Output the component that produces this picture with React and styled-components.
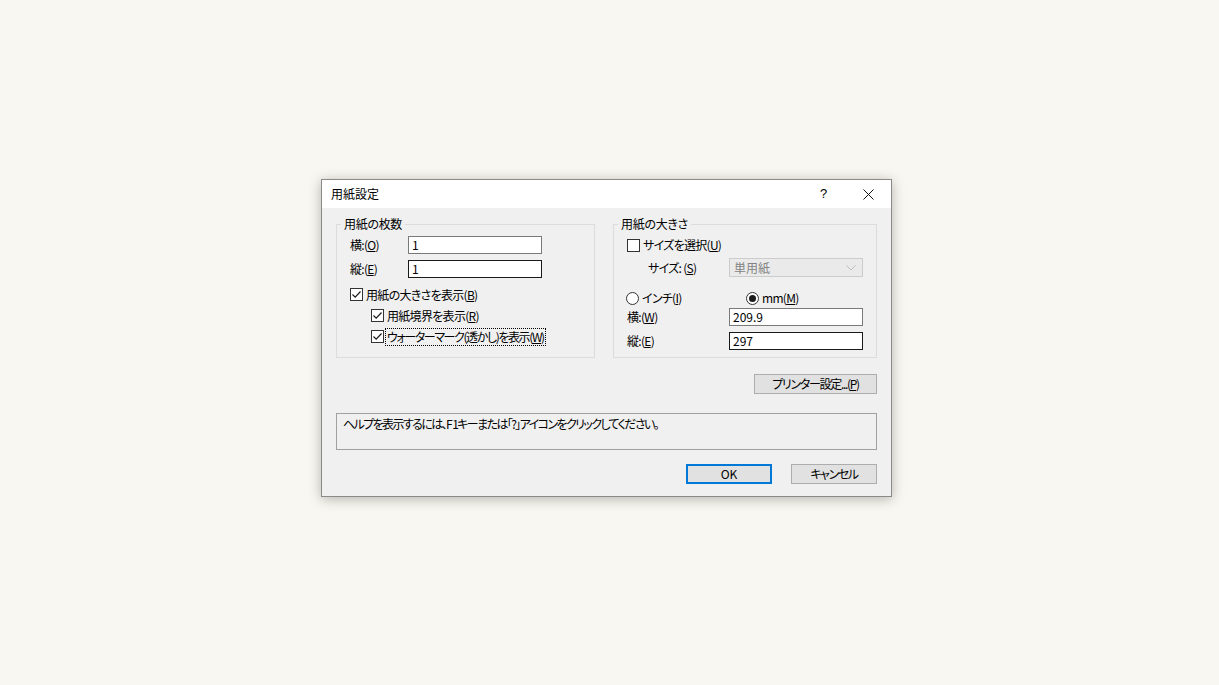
import styled, { createGlobalStyle } from "styled-components";

const GlobalStyle = createGlobalStyle`
	html, body {
		margin: 0;
		padding: 0;
		background: #f8f7f1;
	}
	body {
		font-family: "Noto Sans CJK JP", "Liberation Sans", sans-serif;
		font-size: 12px;
		line-height: 16px;
		color: #000000;
		font-feature-settings: "palt";
		letter-spacing: -0.7px;
	}
`;

function CheckBox({ checked }) {
	return (
		<Box>
			{checked && (
				<svg width="11" height="11" viewBox="0 0 11 11">
					<path d="M1.5 5.5 L4.2 8.2 L9.5 2.5" fill="none" stroke="#1b1b1b" strokeWidth="1.2" />
				</svg>
			)}
		</Box>
	);
}

function Radio({ checked }) {
	return <Round>{checked && <Dot />}</Round>;
}

export default function App() {
	return (
		<>
			<GlobalStyle />
			<Desktop>
				<Dialog>
					<TitleBar>
						<Title>用紙設定</Title>
						<CaptionButton>?</CaptionButton>
						<CaptionButton>
							<svg width="11" height="11" viewBox="0 0 11 11">
								<path d="M0.5 0.5 L10.5 10.5 M10.5 0.5 L0.5 10.5" stroke="#111" strokeWidth="1" />
							</svg>
						</CaptionButton>
					</TitleBar>

					<Body>
						<Groups>
							<Group width={259}>
								<Legend>用紙の枚数</Legend>
								<GroupInner>
									<FieldRow labelWidth={58} top={4}>
										<span>横:(<u>O</u>)</span>
										<TextBox>1</TextBox>
									</FieldRow>
									<FieldRow labelWidth={58} top={6}>
										<span>縦:(<u>E</u>)</span>
										<TextBox focused>1</TextBox>
									</FieldRow>
									<CheckRow top={6}>
										<CheckBox checked />
										<CheckText>用紙の大きさを表示(<u>B</u>)</CheckText>
									</CheckRow>
									<CheckRow indent={21}>
										<CheckBox checked />
										<CheckText>用紙境界を表示(<u>R</u>)</CheckText>
									</CheckRow>
									<CheckRow indent={21}>
										<CheckBox checked />
										<CheckText focused tight={1.4}>ウォーターマーク(透かし)を表示(<u>W</u>)</CheckText>
									</CheckRow>
								</GroupInner>
							</Group>

							<Group width={264}>
								<Legend>用紙の大きさ</Legend>
								<GroupInner>
									<CheckRow top={4} height={18}>
										<CheckBox />
										<CheckText>サイズを選択(<u>U</u>)</CheckText>
									</CheckRow>
									<SelectRow>
										<span>サイズ: (<u>S</u>)</span>
										<Select>
											<span>単用紙</span>
											<svg width="10" height="6" viewBox="0 0 10 6">
												<path d="M0.5 0.5 L5 5 L9.5 0.5" fill="none" stroke="#bdbdbd" strokeWidth="1" />
											</svg>
										</Select>
									</SelectRow>
									<RadioRow>
										<RadioItem>
											<Radio />
											<span>インチ(<u>I</u>)</span>
										</RadioItem>
										<RadioItem>
											<Radio checked />
											<span>mm(<u>M</u>)</span>
										</RadioItem>
									</RadioRow>
									<FieldRow labelWidth={102} top={1}>
										<span>横:(<u>W</u>)</span>
										<TextBox>209.9</TextBox>
									</FieldRow>
									<FieldRow labelWidth={102} top={6}>
										<span>縦:(<u>E</u>)</span>
										<TextBox focused>297</TextBox>
									</FieldRow>
								</GroupInner>
							</Group>
						</Groups>

						<ButtonRow top={16}>
							<PushButton width={123} tight={1.3}>プリンター設定...(<u>P</u>)</PushButton>
						</ButtonRow>

						<HelpBox>ヘルプを表示するには、F 1キーまたは「?」アイコンをクリックしてください。</HelpBox>

						<ButtonRow top={14} gap={19}>
							<PushButton width={86} primary>OK</PushButton>
							<PushButton width={86} tight={1.4}>キャンセル</PushButton>
						</ButtonRow>
					</Body>
				</Dialog>
			</Desktop>
		</>
	);
}

// UI
const Desktop = styled.div`
	width: 1219px;
	height: 685px;
	padding: 179px 0 0 321px;
	box-sizing: border-box;
`;

const Dialog = styled.div`
	width: 571px;
	height: 318px;
	box-sizing: border-box;
	border: 1px solid #8a8a8a;
	background: #f0f0f0;
	box-shadow: 0 2px 12px rgba(0, 0, 0, 0.28);
	display: flex;
	flex-direction: column;
`;

const TitleBar = styled.div`
	height: 28px;
	background: #ffffff;
	display: flex;
	align-items: center;
`;

const Title = styled.div`
	flex: 1;
	padding-left: 9px;
	letter-spacing: 0;
`;

const CaptionButton = styled.div`
	width: 45px;
	height: 28px;
	display: flex;
	align-items: center;
	justify-content: center;
	font-family: "Liberation Sans", sans-serif;
	font-size: 13px;
	letter-spacing: 0;
`;

const Body = styled.div`
	flex: 1;
	padding: 8px 14px 12px 14px;
	display: flex;
	flex-direction: column;
`;

const Groups = styled.div`
	display: flex;
	justify-content: space-between;
`;

const Group = styled.fieldset`
	width: ${(p) => p.width}px;
	height: 142px;
	box-sizing: border-box;
	margin: 0;
	padding: 0;
	border: 1px solid #dcdcdc;
	min-width: 0;
`;

const Legend = styled.legend`
	margin-left: 4px;
	padding: 0 3px;
	line-height: 16px;
	letter-spacing: -0.3px;
`;

const GroupInner = styled.div`
	padding-left: 13px;
	display: flex;
	flex-direction: column;
`;

const FieldRow = styled.div`
	display: grid;
	grid-template-columns: ${(p) => p.labelWidth}px 134px;
	align-items: center;
	height: 18px;
	margin-top: ${(p) => p.top || 0}px;
`;

const TextBox = styled.div`
	height: 18px;
	box-sizing: border-box;
	border: 1px solid ${(p) => (p.focused ? "#1a1a1a" : "#7a7a7a")};
	background: #ffffff;
	padding: 0 3px;
	line-height: 16px;
	letter-spacing: 0;
`;

const CheckRow = styled.div`
	display: flex;
	align-items: center;
	height: ${(p) => p.height || 21}px;
	margin-top: ${(p) => p.top || 0}px;
	padding-left: ${(p) => p.indent || 0}px;
`;

const Box = styled.div`
	width: 13px;
	height: 13px;
	box-sizing: border-box;
	border: 1px solid #333333;
	background: #ffffff;
	display: flex;
	align-items: center;
	justify-content: center;
	flex-shrink: 0;
`;

const CheckText = styled.span`
	margin-left: 1px;
	padding: 0 1px;
	border: 1px dotted ${(p) => (p.focused ? "#000000" : "transparent")};
	white-space: nowrap;
	letter-spacing: ${(p) => (p.tight ? -p.tight : -0.7)}px;
`;

const SelectRow = styled.div`
	display: grid;
	grid-template-columns: 81px 134px;
	align-items: center;
	height: 19px;
	margin-top: 4px;
	padding-left: 21px;
`;

const Select = styled.div`
	height: 19px;
	box-sizing: border-box;
	border: 1px solid #cccccc;
	background: #eaeaea;
	color: #838383;
	display: flex;
	align-items: center;
	justify-content: space-between;
	padding: 0 6px 0 4px;
	letter-spacing: 0;
`;

const RadioRow = styled.div`
	display: grid;
	grid-template-columns: 120px auto;
	align-items: center;
	height: 18px;
	margin-top: 12px;
	margin-left: -1px;
`;

const RadioItem = styled.div`
	display: flex;
	align-items: center;
	gap: 3px;
`;

const Round = styled.div`
	width: 13px;
	height: 13px;
	box-sizing: border-box;
	border: 1px solid #333333;
	border-radius: 50%;
	background: #ffffff;
	display: flex;
	align-items: center;
	justify-content: center;
`;

const Dot = styled.div`
	width: 7px;
	height: 7px;
	border-radius: 50%;
	background: #1b1b1b;
`;

const ButtonRow = styled.div`
	display: flex;
	justify-content: flex-end;
	gap: ${(p) => p.gap || 0}px;
	margin-top: ${(p) => p.top}px;
`;

const PushButton = styled.div`
	width: ${(p) => p.width}px;
	height: 20px;
	box-sizing: border-box;
	border: ${(p) => (p.primary ? "2px solid #0078d7" : "1px solid #adadad")};
	background: #e1e1e1;
	display: flex;
	align-items: center;
	justify-content: center;
	white-space: nowrap;
	letter-spacing: ${(p) => (p.tight ? -p.tight : 0)}px;
`;

const HelpBox = styled.div`
	margin-top: 19px;
	height: 37px;
	box-sizing: border-box;
	border: 1px solid #a0a0a0;
	padding: 2px 6px;
	letter-spacing: -1.6px;
`;
